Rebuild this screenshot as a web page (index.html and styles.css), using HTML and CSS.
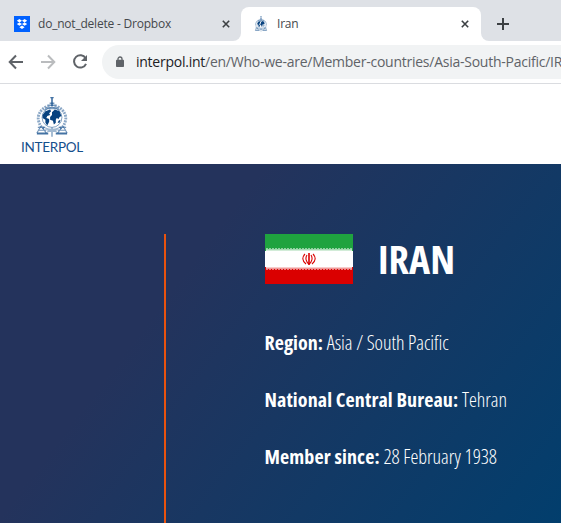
FILE: index.html
```html
<!DOCTYPE html>
<html lang="en">
<head>
<meta charset="utf-8">
<title>Iran</title>
<link rel="stylesheet" href="styles.css">
</head>
<body>
<svg class="defs" aria-hidden="true">
  <defs>
    <symbol id="emblem" viewBox="0 0 36 44">
      <g fill="none" stroke="#15508d">
        <path d="M18 1v10" stroke-width="2" opacity=".7"/>
        <path d="M16 1.500h4M15.500 7.500h5M13 9.500h10" stroke-width="1.500" opacity=".6"/>
        <path d="M12 11C5 15 2 21 4 27s3 6 6 7M24 11c7 4 10 10 8 16s-3 6-6 7" stroke-width="3" stroke-dasharray="2 1" opacity=".5"/>
        <circle cx="18" cy="22.500" r="10.500" stroke-width=".8" opacity=".7"/>
        <path d="M11 13h14M10 15l4-4 4 2 4-2 4 4" stroke-width="1.500" opacity=".5"/>
        <path d="M3 33h8M25 33h8M6 32L2 39M7 32l5 7M30 32l4 7M29 32l-5 7M3 36h9M24 36h9" stroke-width="1.200" opacity=".6"/>
        <path d="M2 39.500h12M22 39.500h12" stroke-width="2" opacity=".8"/>
        <path d="M18 33v10M11 34q7 3 14 0M13 37h10" stroke-width="2" opacity=".4"/>
      </g>
      <path fill="#07427f" d="M8 20l3-4 5-2 1 2-2 2 1 2-3 1-1 2 3 1 0 3-2 4-2-3 0-3-3-2zM18 17l3-3 5 2 2 5-2 1-1 2-2-1-1 2 0 3-2 2-1-4-3-1 0-3 2-2zM25 26l2-1-1 3-2 0z"/>
    </symbol>
    <symbol id="close" viewBox="0 0 8 8"><path d="M.8.8l6.400 6.400M7.200.8L.8 7.200" fill="none" stroke="#3c4043" stroke-width="1.600"/></symbol>
  </defs>
</svg>
<header class="tabs">
  <div class="tab">
    <svg class="favicon" viewBox="0 0 16 16"><path fill="#0061ff" d="M0 0h16v16H0z"/><path fill="#fff" d="M5.400 3l2.600 1.700-2.600 1.700L2.800 4.700zM10.600 3l2.600 1.700-2.600 1.700L8 4.700zM5.400 6.400L8 8.100 5.400 9.800 2.800 8.100zM10.600 6.400l2.600 1.700-2.600 1.700L8 8.100zM8 9.500l2.600 1.700L8 12.900l-2.600-1.700z"/></svg>
    <span class="tab-title">do_not_delete - Dropbox</span>
    <svg class="close"><use href="#close"/></svg>
  </div>
  <div class="tab active">
    <svg class="favicon"><use href="#emblem"/></svg>
    <span class="tab-title">Iran</span>
    <svg class="close"><use href="#close"/></svg>
  </div>
  <div class="rest"><svg class="plus" viewBox="0 0 12 12"><path d="M6 0v12M0 6h12" stroke="#3c4043" stroke-width="2"/></svg></div>
</header>
<nav class="toolbar">
  <svg class="nav-icon" viewBox="0 0 16 16"><path d="M15 8H2M8 1.500L1.700 8 8 14.500" fill="none" stroke="#5f6368" stroke-width="2"/></svg>
  <svg class="nav-icon" viewBox="0 0 16 16"><path d="M1 8h13M8 1.500L14.300 8 8 14.500" fill="none" stroke="#babcbe" stroke-width="2"/></svg>
  <svg class="nav-icon" viewBox="0 0 16 16"><path d="M13.600 4.200A6.200 6.200 0 1 0 14 9.800" fill="none" stroke="#5f6368" stroke-width="2"/><path d="M15 1v6H9z" fill="#5f6368"/></svg>
  <div class="address">
    <svg class="lock" viewBox="0 0 8 11"><path d="M2 4.500V3a2 2 0 0 1 4 0v1.500" fill="none" stroke="#5f6368" stroke-width="1.300"/><rect y="3.800" width="8" height="7.200" rx=".8" fill="#5f6368"/></svg>
    <span class="url"><b>interpol.int</b>/en/Who-we-are/Member-countries/Asia-South-Pacific/IR</span>
  </div>
</nav>
<div class="brand">
  <svg class="logo"><use href="#emblem"/></svg>
  <span class="wordmark">INTERPOL</span>
</div>
<main class="hero">
  <section class="country">
    <div class="heading">
      <svg class="flag" viewBox="0 0 88 50">
        <path fill="#1fa33f" d="M0 0h88v17H0z"/><path fill="#fff" d="M0 17h88v16H0z"/><path fill="#da0000" d="M0 33h88v17H0z"/>
        <path d="M1 14.500h86M1 35.500h86" stroke="#fff" stroke-width="1" opacity=".5" stroke-dasharray="2 1"/>
        <path d="M1 15.500h86M1 34.500h86" stroke="#fff" stroke-width="1" opacity=".6"/>
        <path d="M1 16.500h86M1 33.500h86" stroke="#fff" stroke-width="1" opacity=".8"/>
        <g fill="none" stroke="#da0000"><path d="M44 19v12" stroke-width="1.600"/><path d="M40 20c-3 3-3 7 1 10M48 20c3 3 3 7-1 10M42 21c-2 3-1 7 2 9M46 21c2 3 1 7-2 9" stroke-width="1.100"/></g>
      </svg>
      <h1>IRAN</h1>
    </div>
    <p><b>Region:</b> <span>Asia / South Pacific</span></p>
    <p><b class="bureau">National Central Bureau:</b> <span>Tehran</span></p>
    <p><b class="since">Member since:</b> <span>28 February 1938</span></p>
  </section>
</main>
</body>
</html>
```
FILE: styles.css
```css
* { box-sizing: border-box; }
body { margin: 0; width: 561px; height: 523px; overflow: hidden; background: #fff; font-family: "Open Sans", "Noto Sans", sans-serif; }
svg { display: block; flex: none; }
.defs { width: 0; height: 0; position: absolute; }
.tabs { display: flex; height: 41px; background: linear-gradient(#dee1e6, #dee1e6) top / 100% 20px no-repeat, #fff; }
.tab { display: flex; align-items: center; width: 241px; padding: 7px 11px 0 14px; background: #dee1e6; border-bottom-right-radius: 8px; color: #45484c; font-size: 12px; letter-spacing: -.21px; }
.tab.active { width: 240px; margin-top: 7px; padding: 0 12px; background: #fff; border-radius: 8px 8px 0 0; }
.favicon { width: 16px; height: 16px; margin-right: 8px; }
.tab-title { flex: 1; white-space: nowrap; line-height: 16px; padding-bottom: 1px; }
.close { width: 8px; height: 8px; }
.rest { flex: 1; background: #dee1e6; border-bottom-left-radius: 8px; padding: 18px 0 0 16px; }
.plus { width: 12px; height: 12px; }
.toolbar { display: flex; align-items: center; height: 43px; padding-left: 8px; gap: 16px; border-bottom: 1px solid #dadce0; }
.nav-icon { width: 16px; height: 16px; }
.address { display: flex; align-items: center; flex: 1; min-width: 0; height: 34px; margin-left: -2px; padding-left: 14px; gap: 12px; background: #f1f3f4; border-radius: 17px 0 0 17px; overflow: hidden; }
.lock { width: 8px; height: 11px; margin-top: -1px; }
.url { white-space: nowrap; font-size: 14px; line-height: 18px; padding-bottom: 1px; letter-spacing: -.25px; color: #5f6368; }
.url b { font-weight: 400; color: #202124; }
.brand { display: flex; flex-direction: column; align-items: center; width: 104px; height: 80px; padding-top: 12px; }
.logo { width: 34px; height: 42px; }
.wordmark { margin-top: 2px; font: 13.5px/14px Lato, sans-serif; letter-spacing: -.3px; color: #15508d; }
.hero { height: 359px; padding: 70px 0 0 164px; background: linear-gradient(127deg, #24335c 32%, #003f6e 104%); }
.country { height: 289px; padding-left: 99px; border-left: 2px solid #e9530e; color: #fff; font-stretch: 75%; }
.heading { display: flex; align-items: center; gap: 26px; height: 50px; margin-bottom: 45px; }
.flag { width: 88px; height: 50px; }
h1 { margin: -1px 0 0 -1px; font-size: 40px; line-height: 50px; }
p { margin: 0 0 30px -.5px; font-size: 20px; line-height: 27px; white-space: nowrap; }
p span { font-weight: 300; letter-spacing: -.05px; }
.bureau { letter-spacing: .1px; }
.since { letter-spacing: .1px; }
```
